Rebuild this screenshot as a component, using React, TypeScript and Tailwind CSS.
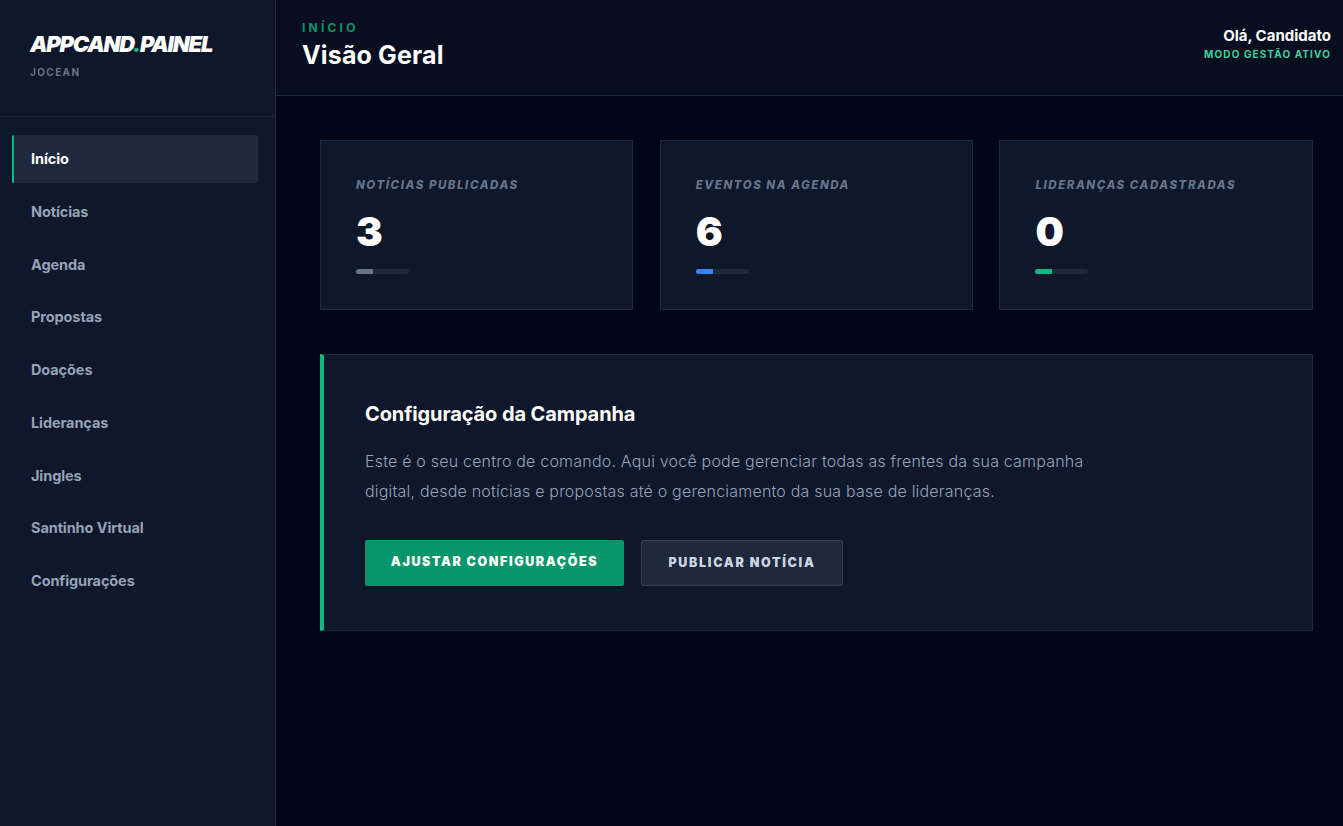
import React from "react";

const nav = ["Início", "Notícias", "Agenda", "Propostas", "Doações", "Lideranças", "Jingles", "Santinho Virtual", "Configurações"];
const stats = [
  { label: "NOTÍCIAS PUBLICADAS", value: "3", bar: "bg-[#64748b]" },
  { label: "EVENTOS NA AGENDA", value: "6", bar: "bg-[#3b82f6]" },
  { label: "LIDERANÇAS CADASTRADAS", value: "0", bar: "bg-[#10b981]" },
];

export default function App() {
  return (
    <div className="flex h-[826px] w-[1343px] overflow-hidden bg-[#020617] font-['Inter',sans-serif]">
      <aside className="w-[276px] shrink-0 border-r border-[#1e293b] bg-[#0f172a]">
        <div className="h-[117px] border-b border-[#1e293b] pl-[30px] pt-[33px]">
          <div className="text-[22px] leading-[22px] font-black italic tracking-[-1.2px] text-white">
            APPCAND<span className="text-[#10b981]">.</span>PAINEL
          </div>
          <div className="mt-[6px] text-[10px] leading-[22px] font-bold tracking-[1.4px] text-[#64748b]">JOCEAN</div>
        </div>
        <nav className="flex flex-col gap-[4.75px] pl-3 pr-[17px] pt-[18px]">
          {nav.map((n, i) => (
            <div
              key={n}
              className={
                i === 0
                  ? "flex h-[48px] items-center rounded-[2px] border-l-2 border-[#10b981] bg-[#1e293b] pl-[17px] text-[14.5px] font-bold tracking-[-0.1px] text-white"
                  : "flex h-[48px] items-center pl-[19px] text-[14.5px] font-bold tracking-[-0.1px] text-[#94a3b8]"
              }
            >
              {n}
            </div>
          ))}
        </nav>
      </aside>
      <div className="flex min-w-0 flex-1 flex-col">
        <header className="flex h-[96px] items-start justify-between border-b border-[#1e293b] bg-[#080e20] pl-[26px] pr-3 pt-[20px]">
          <div>
            <div className="text-[12px] leading-[16px] font-bold tracking-[3.2px] text-[#059669]">INÍCIO</div>
            <div className="mt-[3px] text-[25px] leading-[33px] font-bold tracking-[0.15px] text-white">Visão Geral</div>
          </div>
          <div className="pt-[7px] text-right">
            <div className="text-[15px] leading-[17px] font-bold text-white">Olá, Candidato</div>
            <div className="mt-[3px] text-[10px] leading-[14px] font-bold tracking-[1.1px] text-[#34d399]">MODO GESTÃO ATIVO</div>
          </div>
        </header>
        <main className="pl-[44px] pr-[30.2px] pt-[44px]">
          <div className="grid grid-cols-3 gap-[26.3px]">
            {stats.map((s) => (
              <div key={s.label} className="h-[170px] border border-[#1e293b] bg-[#0f172a] pl-[35px] pt-[36px]">
                <div className="text-[11.5px] leading-[16px] font-extrabold italic tracking-[1.55px] text-[#64748b]">{s.label}</div>
                <div className="mt-[15px] text-[40px] leading-[48px] font-black text-white">{s.value}</div>
                <div className="mt-[13px] h-[5px] w-[53px] overflow-hidden rounded-full bg-[#1e293b]">
                  <div className={"h-full w-[17px] " + s.bar}></div>
                </div>
              </div>
            ))}
          </div>
          <section className="mt-[44px] h-[277px] border border-l-4 border-[#1e293b] border-l-[#10b981] bg-[#0f172a] pl-[41px] pt-[45px]">
            <h2 className="text-[20px] leading-[28px] font-bold tracking-[-0.1px] text-white">Configuração da Campanha</h2>
            <p className="mt-[18px] w-[735px] text-[16px] leading-[30px] font-[350] tracking-[0.2px] text-[#94a3b8]">
              Este é o seu centro de comando. Aqui você pode gerenciar todas as frentes da sua campanha digital, desde notícias e propostas até o gerenciamento da sua base de lideranças.
            </p>
            <div className="mt-[34px] flex items-center gap-[17px]">
              <button className="h-[46px] w-[259px] rounded-[2px] bg-[#059669] pb-[2px] text-[12.5px] font-black tracking-[1.6px] text-white">AJUSTAR CONFIGURAÇÕES</button>
              <button className="h-[46px] w-[202px] rounded-[2px] border border-[#334155] bg-[#1e293b] text-[12.5px] font-black tracking-[1.7px] text-[#cbd5e1]">PUBLICAR NOTÍCIA</button>
            </div>
          </section>
        </main>
      </div>
    </div>
  );
}
